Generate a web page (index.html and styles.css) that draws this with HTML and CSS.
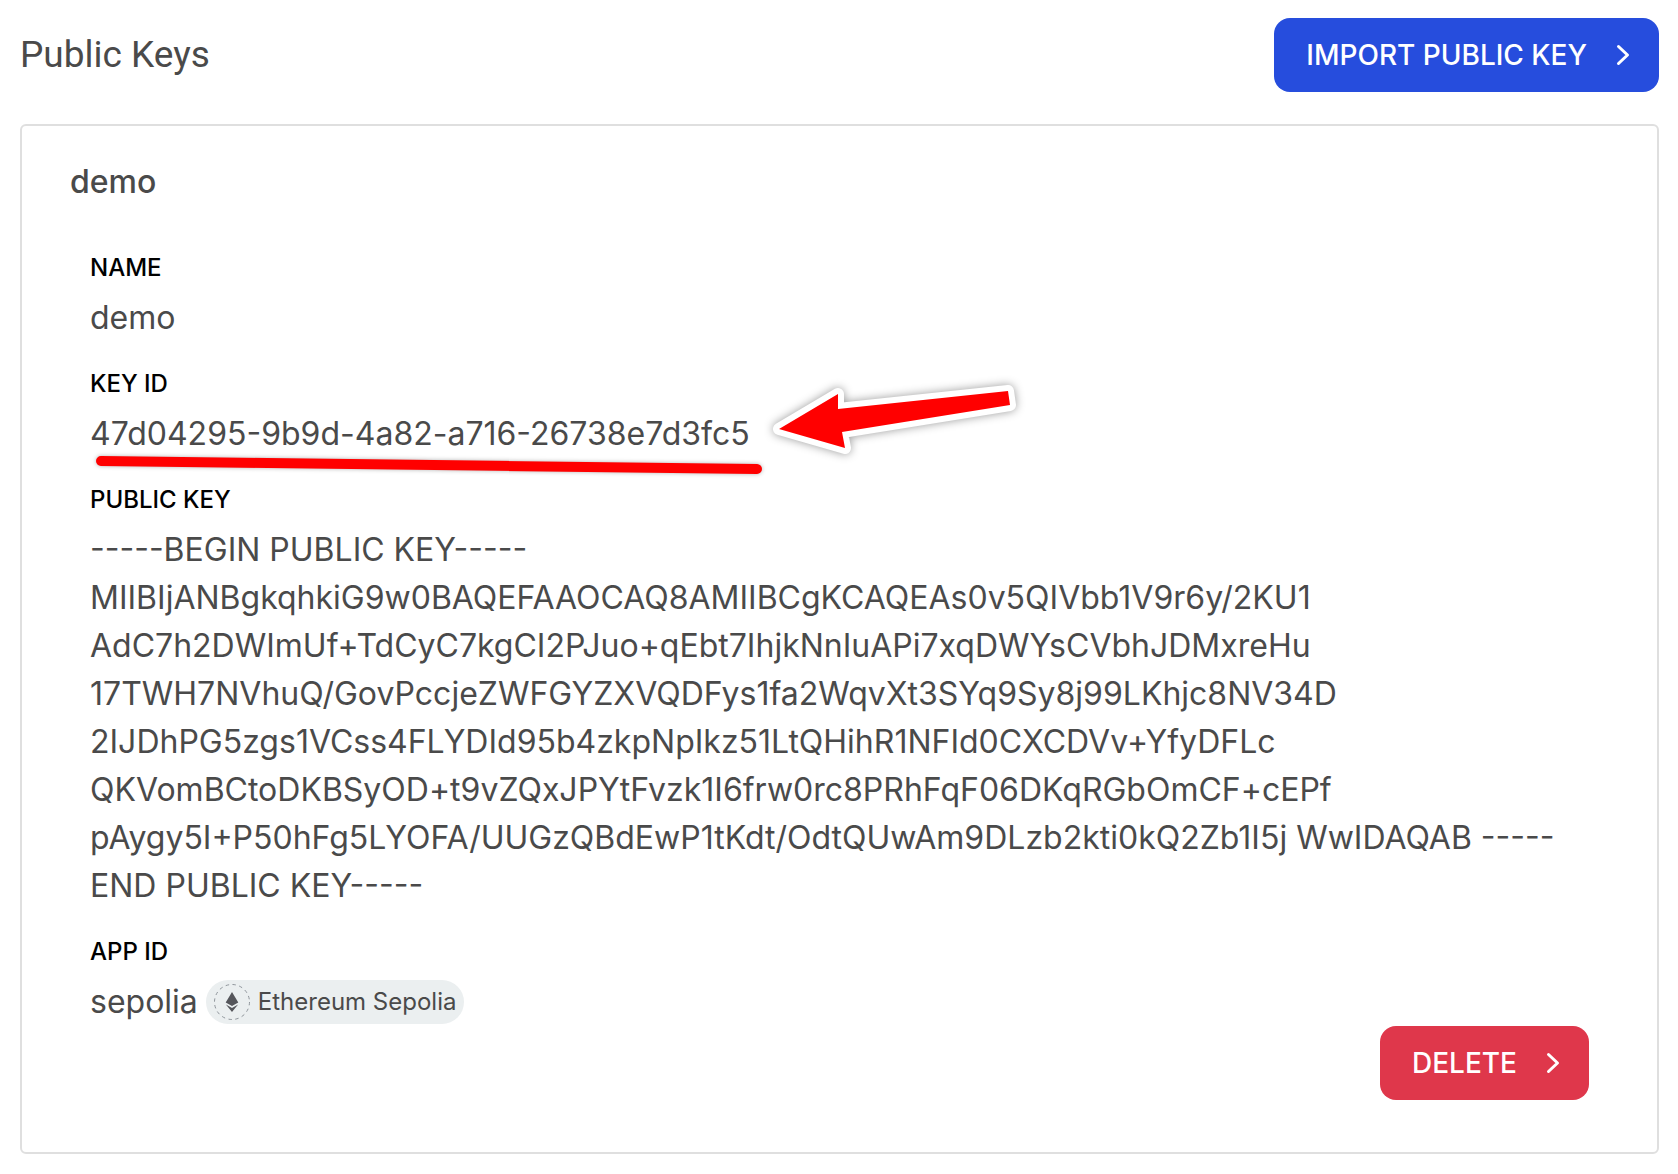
FILE: index.html
```html
<!DOCTYPE html>
<html lang="en">
<head>
<meta charset="utf-8">
<title>Public Keys</title>
<link rel="stylesheet" href="styles.css">
</head>
<body>
<main class="page">
  <header class="page-header">
    <h1 class="page-title">Public Keys</h1>
    <button class="button button-primary" type="button">Import public key
      <svg class="chevron" viewBox="0 0 16 24" aria-hidden="true"><path d="M3.5 3.5 L12.5 12 L3.5 20.5"/></svg>
    </button>
  </header>
  <section class="card">
    <h2 class="card-title">demo</h2>
    <div class="card-body">
      <dl class="fields">
        <div class="field">
          <dt>Name</dt>
          <dd>demo</dd>
        </div>
        <div class="field">
          <dt>Key ID</dt>
          <dd class="marked">47d04295-9b9d-4a82-a716-26738e7d3fc5
            <svg class="annotation" viewBox="0 0 940 80" aria-hidden="true">
              <path class="underline" d="M11 51 L667 59"/>
              <path class="arrow-edge" d="M689 19 L748 -16 L748 -1 L918 -19 L920 -5 L752 22 L755 38 Z"/>
              <path class="arrow" d="M689 19 L748 -16 L748 -1 L918 -19 L920 -5 L752 22 L755 38 Z"/>
            </svg>
          </dd>
        </div>
        <div class="field">
          <dt>Public key</dt>
          <dd class="pem">-----BEGIN PUBLIC KEY-----
MIIBIjANBgkqhkiG9w0BAQEFAAOCAQ8AMIIBCgKCAQEAs0v5QIVbb1V9r6y/2KU1
AdC7h2DWImUf+TdCyC7kgCI2PJuo+qEbt7IhjkNnIuAPi7xqDWYsCVbhJDMxreHu
17TWH7NVhuQ/GovPccjeZWFGYZXVQDFys1fa2WqvXt3SYq9Sy8j99LKhjc8NV34D
2IJDhPG5zgs1VCss4FLYDId95b4zkpNpIkz51LtQHihR1NFId0CXCDVv+YfyDFLc
QKVomBCtoDKBSyOD+t9vZQxJPYtFvzk1I6frw0rc8PRhFqF06DKqRGbOmCF+cEPf
pAygy5I+P50hFg5LYOFA/UUGzQBdEwP1tKdt/OdtQUwAm9DLzb2kti0kQ2Zb1I5j WwIDAQAB -----
END PUBLIC KEY-----</dd>
        </div>
        <div class="field">
          <dt>App ID</dt>
          <dd class="app">sepolia
            <span class="badge">
              <svg class="badge-icon" viewBox="0 0 36 36" aria-hidden="true">
                <circle cx="18" cy="18" r="17.5" fill="none" stroke="#8f959b" stroke-width="1" stroke-dasharray="3.4 3.47"/>
                <path fill="#55565b" d="M18 8 L24.3 18.4 L18 22 L11.7 18.4 Z M11.9 20.4 L18 24 L24.1 20.4 L18 28 Z"/>
              </svg>
              Ethereum Sepolia
            </span>
          </dd>
        </div>
      </dl>
      <div class="actions">
        <button class="button button-danger" type="button">Delete
          <svg class="chevron" viewBox="0 0 16 24" aria-hidden="true"><path d="M3.5 3.5 L12.5 12 L3.5 20.5"/></svg>
        </button>
      </div>
    </div>
  </section>
</main>
</body>
</html>
```
FILE: styles.css
```css
* {
  box-sizing: border-box;
}

body {
  margin: 0;
  background: #fff;
  color: #4a4a4a;
  font-family: Inter, "Liberation Sans", sans-serif;
  font-size: 32px;
  line-height: 48px;
  font-optical-sizing: none;
}

.page {
  padding: 18px 19px 20px 20px;
}

.page-header {
  display: flex;
  align-items: center;
  justify-content: space-between;
  margin-bottom: 32px;
}

.page-title {
  margin: 0;
  font-family: Roboto, sans-serif;
  font-size: 37px;
  font-weight: 400;
}

.button {
  display: flex;
  align-items: center;
  gap: 28px;
  height: 74px;
  padding: 0 28px 0 32px;
  border: 0;
  border-radius: 16px;
  color: #fff;
  font-family: inherit;
  font-size: 28px;
  font-weight: 500;
  line-height: 42px;
  text-transform: uppercase;
}

.button-primary {
  background: #264ddd;
}

.button-danger {
  background: #df374b;
}

.chevron {
  width: 16px;
  height: 24px;
  fill: none;
  stroke: #fff;
  stroke-width: 3;
  stroke-linecap: round;
  stroke-linejoin: round;
}

.card {
  padding: 32px 48px 52px;
  border: 2px solid #dfdfdf;
  border-radius: 6px;
}

.card-title {
  margin: 0 0 44px;
  font-size: 32px;
  font-weight: 500;
}

.card-body {
  padding: 0 20px;
}

.fields {
  display: flex;
  flex-direction: column;
  gap: 24px;
  margin: 0;
}

.field dt {
  margin-bottom: 8px;
  color: #000;
  font-size: 24px;
  font-weight: 500;
  line-height: 36px;
  text-transform: uppercase;
}

.field dd {
  margin: 0;
}

.marked {
  position: relative;
}

.annotation {
  position: absolute;
  top: 0;
  left: 0;
  width: 940px;
  height: 80px;
  overflow: visible;
  fill: none;
  stroke-linejoin: round;
}

.underline {
  stroke: #f00;
  stroke-width: 10;
  stroke-linecap: round;
  filter: drop-shadow(0 0 2px rgba(0, 0, 0, 0.3));
}

.arrow-edge {
  fill: #fff;
  stroke: #fff;
  stroke-width: 12;
  filter: drop-shadow(0 0 5px rgba(0, 0, 0, 0.4));
}

.arrow {
  fill: #f00;
}

.pem {
  white-space: pre-line;
}

.app {
  display: flex;
  align-items: center;
  gap: 8px;
}

.badge {
  display: flex;
  align-items: center;
  gap: 8px;
  height: 44px;
  padding: 0 8px;
  border-radius: 22px;
  background: #ebeff0;
  font-size: 24px;
}

.badge-icon {
  width: 36px;
  height: 36px;
}

.actions {
  display: flex;
  justify-content: flex-end;
}
```
